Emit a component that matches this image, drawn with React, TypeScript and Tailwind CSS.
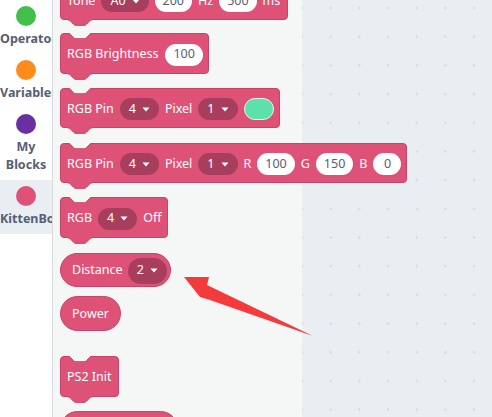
import React from "react";

const PINK = "#de5277";

function Notch() {
  return (
    <svg
      className="absolute left-[7px] top-[-1px]"
      width="24"
      height="5.5"
      viewBox="0 0 36 8"
      preserveAspectRatio="none"
    >
      <path
        d="M0,0 c2,0 3,1 4,2 l4,4 c1,1 2,2 4,2 h12 c2,0 3,-1 4,-2 l4,-4 c1,-1 2,-2 4,-2 Z"
        fill="#f5f6f6"
      />
      <path
        d="M0,0.5 c2,0 3,1 4,2 l4,4 c1,1 2,2 4,2 h12 c2,0 3,-1 4,-2 l4,-4 c1,-1 2,-2 4,-2"
        fill="none"
        stroke="#c84369"
        strokeWidth="1"
        vectorEffect="non-scaling-stroke"
      />
    </svg>
  );
}

function Tab() {
  return (
    <svg
      className="absolute left-[7px] top-full"
      width="24"
      height="6.5"
      viewBox="0 -1.5 36 9.7"
      preserveAspectRatio="none"
    >
      <path
        d="M0,-1.5 L0,0 c2,0 3,1 4,2 l4,4 c1,1 2,2 4,2 h12 c2,0 3,-1 4,-2 l4,-4 c1,-1 2,-2 4,-2 L36,-1.5 Z"
        fill={PINK}
      />
      <path
        d="M0,0 c2,0 3,1 4,2 l4,4 c1,1 2,2 4,2 h12 c2,0 3,-1 4,-2 l4,-4 c1,-1 2,-2 4,-2"
        fill="none"
        stroke="#c84369"
        strokeWidth="1"
        vectorEffect="non-scaling-stroke"
      />
    </svg>
  );
}

function Caret() {
  return (
    <svg width="8" height="5" viewBox="0 0 8 5">
      <path d="M0.5,0.5 L7.5,0.5 L4,4.5 Z" fill="#fff" />
    </svg>
  );
}

function Drop({ v, h = "h-[22px]" }: { v: string; h?: string }) {
  return (
    <div
      className={`flex ${h} shrink-0 items-center gap-[6px] rounded-full bg-[#a83e5e] pl-[9px] pr-[9px] text-white`}
    >
      <span>{v}</span>
      <Caret />
    </div>
  );
}

function Num({ v }: { v: string }) {
  return (
    <div className="flex h-[22px] min-w-[28px] shrink-0 items-center justify-center rounded-full bg-white px-[8px] text-[#575e75]">
      {v}
    </div>
  );
}

function Stmt({
  children,
  h = "h-[40px]",
  mt,
}: {
  children: React.ReactNode;
  h?: string;
  mt: string;
}) {
  return (
    <div
      className={`relative ${mt} flex ${h} w-max shrink-0 items-center gap-[6px] whitespace-nowrap rounded-[4px] border border-[#c84369] bg-[#de5277] pl-[6px] pr-[5px] pt-[2px] text-white`}
    >
      <Notch />
      {children}
      <Tab />
    </div>
  );
}

function Cat({
  color,
  label,
  active,
}: {
  color: string;
  label: React.ReactNode;
  active?: boolean;
}) {
  return (
    <div
      className={`flex w-full flex-col items-center pt-[6px] pb-[6px] ${
        active ? "bg-[#e9eef2]" : ""
      }`}
    >
      <div
        className="h-[20px] w-[20px] rounded-full"
        style={{ backgroundColor: color }}
      />
      <div className="mt-[4px] w-full overflow-hidden whitespace-nowrap text-center text-[12.5px] font-bold leading-[18px] text-[#575e75]">
        {label}
      </div>
    </div>
  );
}

export default function App() {
  return (
    <div className="relative flex h-[417px] w-[492px] overflow-hidden bg-white font-['Noto_Sans',sans-serif] text-[12.5px]">
      {/* sidebar */}
      <div className="relative z-20 flex w-[53px] shrink-0 flex-col border-r border-[#d6d9de] bg-white">
        <Cat color="#40bf4a" label="Operators" />
        <Cat color="#ff8c1a" label="Variables" />
        <Cat
          color="#6a2fa0"
          label={
            <>
              My
              <br />
              Blocks
            </>
          }
        />
        <Cat color="#de5277" label="KittenBot" active />
      </div>

      {/* flyout */}
      <div className="relative z-10 flex w-[249px] shrink-0 flex-col items-start bg-[#f5f6f6] pl-[7px]">
        <Stmt mt="mt-[-20px]">
          <span>Tone</span>
          <Drop v="A0" />
          <Num v="200" />
          <span>Hz</span>
          <Num v="500" />
          <span className="mr-[2px]">ms</span>
        </Stmt>

        <Stmt mt="mt-[13px]" h="h-[41px]">
          <span className="mr-[1px]">RGB Brightness</span>
          <Num v="100" />
        </Stmt>

        <Stmt mt="mt-[14px]">
          <span>RGB Pin</span>
          <Drop v="4" />
          <span>Pixel</span>
          <Drop v="1" />
          <div className="h-[22px] w-[30px] shrink-0 rounded-full border border-[#e6f7ef] bg-[#5ce1ad]" />
        </Stmt>

        <Stmt mt="mt-[15px]">
          <span>RGB Pin</span>
          <Drop v="4" />
          <span>Pixel</span>
          <Drop v="1" />
          <span>R</span>
          <Num v="100" />
          <span>G</span>
          <Num v="150" />
          <span>B</span>
          <Num v="0" />
        </Stmt>

        <Stmt mt="mt-[14px]" h="h-[41px]">
          <span>RGB</span>
          <Drop v="4" />
          <span>Off</span>
        </Stmt>

        <div className="mt-[15px] flex h-[34px] w-max shrink-0 items-center gap-[5px] whitespace-nowrap rounded-full border border-[#c84369] bg-[#de5277] pl-[11px] pr-[3px] pt-[1px] text-white">
          <span>Distance</span>
          <Drop v="2" h="h-[26px]" />
        </div>

        <div className="mt-[9px] flex h-[35px] w-max shrink-0 items-center whitespace-nowrap rounded-full border border-[#c84369] bg-[#de5277] px-[11px] pt-[2px] text-white">
          <span>Power</span>
        </div>

        <Stmt mt="mt-[25px]" h="h-[41px]">
          <span className="mr-[1px]">PS2 Init</span>
        </Stmt>

        <div className="mt-[14px] h-[35px] w-[118px] shrink-0 rounded-full border border-[#c84369] bg-[#de5277]" />
      </div>

      {/* workspace */}
      <div className="flex-1 bg-[#e9eef2] bg-[radial-gradient(circle,#d6dbe1_1px,transparent_1.4px)] bg-[size:28.7px_28.7px] bg-[position:-14.35px_-6.35px]" />

      {/* arrow */}
      <svg
        className="pointer-events-none absolute left-0 top-0 z-30"
        width="492"
        height="417"
        viewBox="0 0 492 417"
      >
        <polygon
          points="184,277 209,277 207,285 313,336 210,300 200,297"
          fill="#f43a3a"
        />
      </svg>
    </div>
  );
}
